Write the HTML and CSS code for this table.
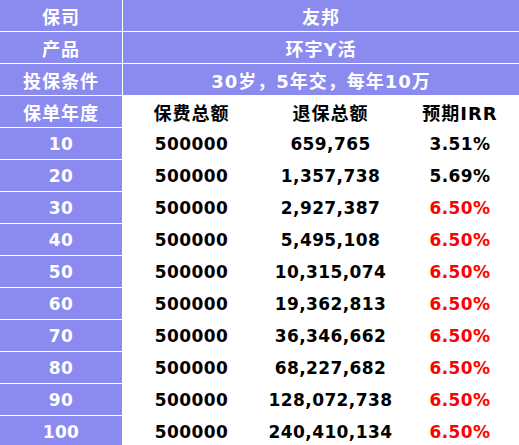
FILE: index.html
```html
<!DOCTYPE html>
<html lang="zh-CN">
<head>
    <meta charset="UTF-8">
    <meta name="viewport" content="width=device-width, initial-scale=1.0">
    <title>友邦 环宇Y活</title>
    <link rel="stylesheet" href="styles.css">
</head>
<body>

    <div class="plan-table">
        <!-- header rows -->
        <div class="cell label cjk">保司</div>
        <div class="cell head wide cjk">友邦</div>
        <div class="cell label cjk">产品</div>
        <div class="cell head wide cjk">环宇Y活</div>
        <div class="cell label cjk">投保条件</div>
        <div class="cell head wide cjk">30岁，5年交，每年10万</div>

        <div class="cell label cjk">保单年度</div>
        <div class="cell cjk">保费总额</div>
        <div class="cell cjk">退保总额</div>
        <div class="cell cjk">预期IRR</div>

        <div class="cell label">10</div>
        <div class="cell">500000</div>
        <div class="cell">659,765</div>
        <div class="cell">3.51%</div>

        <div class="cell label">20</div>
        <div class="cell">500000</div>
        <div class="cell">1,357,738</div>
        <div class="cell">5.69%</div>

        <div class="cell label">30</div>
        <div class="cell">500000</div>
        <div class="cell">2,927,387</div>
        <div class="cell red">6.50%</div>

        <div class="cell label">40</div>
        <div class="cell">500000</div>
        <div class="cell">5,495,108</div>
        <div class="cell red">6.50%</div>

        <div class="cell label">50</div>
        <div class="cell">500000</div>
        <div class="cell">10,315,074</div>
        <div class="cell red">6.50%</div>

        <div class="cell label">60</div>
        <div class="cell">500000</div>
        <div class="cell">19,362,813</div>
        <div class="cell red">6.50%</div>

        <div class="cell label">70</div>
        <div class="cell">500000</div>
        <div class="cell">36,346,662</div>
        <div class="cell red">6.50%</div>

        <div class="cell label">80</div>
        <div class="cell">500000</div>
        <div class="cell">68,227,682</div>
        <div class="cell red">6.50%</div>

        <div class="cell label">90</div>
        <div class="cell">500000</div>
        <div class="cell">128,072,738</div>
        <div class="cell red">6.50%</div>

        <div class="cell label">100</div>
        <div class="cell">500000</div>
        <div class="cell">240,410,134</div>
        <div class="cell red">6.50%</div>
    </div>

</body>
</html>
```

FILE: styles.css
```css
body {
    margin: 0;
    background: #fff;
}

.plan-table {
    display: grid;
    grid-template-columns: 122px 137px 139px 1fr;
    grid-auto-rows: 31px;
    column-gap: 1px;
    row-gap: 1px;
    width: 519px;
    background: #fff;
    font-family: "DejaVu Sans", "Noto Sans CJK SC", sans-serif;
    font-weight: bold;
    font-size: 17px;
    color: #000;
}

.cell {
    display: flex;
    align-items: center;
    justify-content: center;
    white-space: nowrap;
    letter-spacing: 0.4px;
}

.cjk {
    font-size: 18px;
    letter-spacing: 1px;
}

.label,
.head {
    background: #8b8bef;
    color: #fff;
}

.wide {
    grid-column: 2 / 5;
}

.red {
    color: #f00;
}
```
